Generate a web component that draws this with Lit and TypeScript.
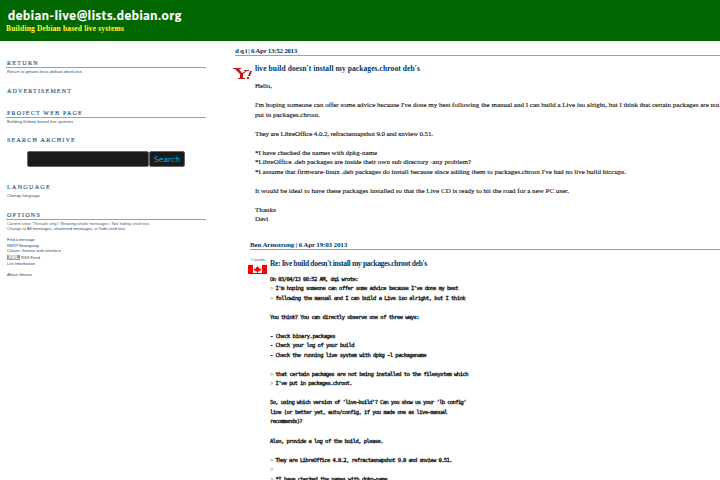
import { LitElement, html, css, svg } from "lit";
import { customElement, property } from "lit/decorators.js";

/** One line of text, tracked so that it fills the given measure. */
@customElement("fit-line")
class FitLine extends LitElement {
  @property({ type: Number }) measure = 0;
  static styles = css`
    :host { display: block; width: max-content; white-space: pre; }
    span { display: inline-block; white-space: pre; vertical-align: top; }
  `;
  render() {
    return html`<span><slot></slot></span>`;
  }
  firstUpdated() {
    const fit = () => {
      const n = (this.textContent || "").length;
      this.style.letterSpacing = "0px";
      const w = this.shadowRoot!.querySelector("span")!.getBoundingClientRect().width;
      if (n && w) this.style.letterSpacing = (this.measure - w) / n + "px";
    };
    fit();
    document.fonts.ready.then(fit);
  }
}

type Row = [string, number] | null;

const first: Row[] = [
  ["Hello,", 17],
  null,
  ["I'm hoping someone can offer some advice because I've done my best following the manual and I can build a Live iso alright, but I think that certain packages are not", 464.5],
  ["put in packages.chroot.", 65],
  null,
  ["They are LibreOffice 4.0.2, refractasnapshot 9.0 and xnview 0.51.", 178],
  null,
  ["*I have checked the names with dpkg-name", 122],
  ["*LibreOffice .deb packages are inside their own sub directory -any problem?", 216],
  ["*I assume that firmware-linux .deb packages do install because since adding them to packages.chroot I've had no live build hiccups.", 371],
  null,
  ["It would be ideal to have these packages installed so that the Live CD is ready to hit the road for a new PC user.", 314],
  null,
  ["Thanks", 21],
  ["Davi", 13],
];

const reply: Row[] = [
  ["On 03/04/13 08:52 AM, dqi wrote:", 88],
  ["> I'm hoping someone can offer some advice because I've done my best", 188],
  ["> following the manual and I can build a Live iso alright, but I think", 195],
  null,
  ["You think? You can directly observe one of three ways:", 149],
  null,
  ["- Check binary.packages", 65],
  ["- Check your log of your build", 84],
  ["- Check the running live system with dpkg -l packagename", 156],
  null,
  ["> that certain packages are not being installed to the filesystem which", 198],
  ["> I've put in packages.chroot.", 82],
  null,
  ["So, using which version of 'live-build'? Can you show us your 'lb config'", 196],
  ["line (or better yet, auto/config, if you made one as live-manual", 177],
  ["recommends)?", 32],
  null,
  ["Also, provide a log of the build, please.", 113],
  null,
  ["> They are LibreOffice 4.0.2, refractasnapshot 9.0 and xnview 0.51.", 182],
  [">", 4],
  ["> *I have checked the names with dpkg-name", 117],
];

@customElement("app-root")
class AppRoot extends LitElement {
  static styles = css`
    :host {
      display: block; width: 720px; height: 480px; overflow: hidden;
      background: #fff; color: #111;
      font-family: "Liberation Serif", serif;
    }
    header { height: 41px; box-sizing: border-box; padding: 7.5px 0 0 6px; background: #006600; }
    .list {
      font: 900 12.5px/16px Lato, sans-serif; color: #fff; padding-left: 2px;
      -webkit-text-stroke: 0.15px #fff;
    }
    .tag { font: bold 7.5px/9px "Liberation Serif", serif; color: #ffff33; }
    .body { display: flex; height: 439px; }
    aside {
      box-sizing: border-box; width: 206px; padding: 18px 0 0 6px; flex: none;
      display: grid; grid-template-rows: 28px 22px 27px 47px 28px 1fr;
      font: 4px/5px "Liberation Sans", sans-serif; color: #194673;
    }
    h2 {
      margin: 0; height: 8px; padding-left: 1px; border-bottom: 1px solid transparent;
      font: 6px/8px "Liberation Serif", serif; color: #265482;
      -webkit-text-stroke: 0.15px #265482;
    }
    .ruled { border-color: #8ba5c0; }
    .small { padding: 0.5px 0 0 1px; }
    .small.opts { padding-top: 1px; }
    .plain { color: #555; }
    .link { color: #194673; }
    .gap { margin-top: 6px; }
    .nudge { margin-top: 1px; }
    .feed { display: flex; align-items: center; gap: 1px; height: 6px; margin-top: 1px; }
    .xml {
      width: 13px; height: 5px; background: #999; color: #fff; text-align: center;
      font: bold 5px/5px "Liberation Sans", sans-serif;
    }
    .search { display: flex; margin: 6px 0 0 21px; width: 158px; height: 16px; }
    .field, .button {
      box-sizing: border-box; height: 16px; background: #1b1b1b;
      border: 1px solid #686868; border-radius: 2px;
    }
    .field { width: 122px; }
    .button {
      width: 36px; padding: 1px 0 0 4px; color: #00b4f0;
      font: 7.5px/14px "DejaVu Sans", sans-serif;
    }
    main { flex: 1; min-width: 0; padding-left: 29px; overflow: hidden; }
    .head {
      height: 9px; margin-top: 5px; border-bottom: 1px solid #8ba5c0; color: #003366;
      font: bold 7px/11px "Liberation Serif", serif;
    }
    .post { display: flex; }
    .mark { flex: none; }
    .one .mark { width: 20px; margin-left: -2px; padding-top: 12px; }
    .one .text { padding: 8px 0 0 2px; }
    .title { height: 10px; font: bold 7.5px/10px "Liberation Serif", serif; color: #003366; }
    .lines { font: 7px/9.53px "Liberation Serif", serif; -webkit-text-stroke: 0.12px #111; }
    .row { height: 9.53px; }
    .one .lines { padding-top: 8px; }
    .reply { margin-left: 15px; }
    .reply .head { margin-top: 15px; }
    .two .mark { width: 20px; margin-left: -2px; padding-top: 7px; }
    .two .text { padding: 9px 0 0 2px; }
    .country { color: #555; font: 4.5px/5px "Liberation Serif", serif; padding-left: 3px; height: 8px; }
    .two .lines {
      padding-top: 6px; font: 5.5px/9.53px "DejaVu Sans Mono", monospace;
      color: #222; -webkit-text-stroke: 0.35px #222;
    }
    .quote { color: #888; -webkit-text-stroke: 0; }
    svg { display: block; }
  `;

  private lines(rows: Row[]) {
    return rows.map((r) => {
      if (!r) return html`<div class="row"></div>`;
      const quoted = r[0].startsWith(">");
      return html`<div class="row"><fit-line .measure=${r[1]}>${
        quoted ? html`<span class="quote">&gt;</span>${r[0].slice(1)}` : r[0]
      }</fit-line></div>`;
    });
  }

  private fit(text: string, measure: number, cls = "") {
    return html`<div class=${cls}><fit-line .measure=${measure}>${text}</fit-line></div>`;
  }

  render() {
    return html`
      <header>
        <fit-line class="list" .measure=${174}>debian-live@lists.debian.org</fit-line>
        <fit-line class="tag" .measure=${118}>Building Debian based live systems</fit-line>
      </header>
      <div class="body">
        <aside>
          <section>
            <h2 class="ruled"><fit-line .measure=${32}>RETURN</fit-line></h2>
            <div class="small">${this.fit("Return to gmane.linux.debian.devel.live.", 76)}</div>
          </section>
          <section><h2><fit-line .measure=${65}>ADVERTISEMENT</fit-line></h2></section>
          <section>
            <h2 class="ruled"><fit-line .measure=${76}>PROJECT WEB PAGE</fit-line></h2>
            <div class="small">${this.fit("Building Debian based live systems", 66)}</div>
          </section>
          <section>
            <h2><fit-line .measure=${69}>SEARCH ARCHIVE</fit-line></h2>
            <div class="search">
              <div class="field"></div>
              <div class="button"><fit-line .measure=${26}>Search</fit-line></div>
            </div>
          </section>
          <section>
            <h2><fit-line .measure=${44}>LANGUAGE</fit-line></h2>
            <div class="small">${this.fit("Change language", 33)}</div>
          </section>
          <section>
            <h2 class="ruled"><fit-line .measure=${34}>OPTIONS</fit-line></h2>
            <div class="small opts">
              ${this.fit("Current view: Threads only / Showing whole messages / Not hiding cited text.", 143, "plain")}
              <fit-line class="plain" .measure=${119}>Change to <span class="link">All messages</span>, <span class="link">shortened messages</span>, or <span class="link">hide cited text</span>.</fit-line>
              ${this.fit("Find a message", 28, "gap")}
              ${this.fit("NNTP Newsgroup", 32, "nudge")}
              ${this.fit("Classic Gmane web interface", 54)}
              <div class="feed"><div class="xml">XML</div>${this.fit("RSS Feed", 19)}</div>
              ${this.fit("List Information", 28, "nudge")}
              ${this.fit("About Gmane", 25, "gap")}
            </div>
          </section>
        </aside>
        <main>
          <div class="head"><fit-line .measure=${62}>d q i | 6 Apr 13:52 2013</fit-line></div>
          <div class="post one">
            <div class="mark">${this.yahoo()}</div>
            <div class="text">
              ${this.fit("live build doesn't install my packages.chroot deb's", 165, "title")}
              <div class="lines">${this.lines(first)}</div>
            </div>
          </div>
          <div class="reply">
            <div class="head"><fit-line .measure=${97}>Ben Armstrong | 6 Apr 19:03 2013</fit-line></div>
            <div class="post two">
              <div class="mark">
                ${this.fit("Canada", 14, "country")}
                ${this.flag()}
              </div>
              <div class="text">
                ${this.fit("Re: live build doesn't install my packages.chroot deb's", 157, "title")}
                <div class="lines">${this.lines(reply)}</div>
              </div>
            </div>
          </div>
        </main>
      </div>
    `;
  }

  private yahoo() {
    return html`<svg width="20" height="12" viewBox="0 0 20 12">${svg`
      <path d="M0 0H8V1H6L9 5L13 3H11V2H16V3H14L10 6V10H12V11H5V10H7V6L2 1H0Z" fill="#b31b1f"/>
      <path d="M17 3H19L17 8H15Z M14 9H16V11H14Z" fill="#b31b1f"/>`}</svg>`;
  }

  private flag() {
    return html`<svg width="19" height="9" viewBox="0 0 19 9">${svg`
      <path d="M0 0H19V9H0Z" fill="#fff"/>
      <path d="M0 0H5V9H0Z M14 0H19V9H14Z" fill="#f00"/>
      <path d="M9.5 1L10.5 2.5L11.3 2.2V4L13.5 3.5L13 5L11 6.5H10V8H9V6.5H8L6 5L5.5 3.5L7.7 4V2.2L8.5 2.5Z" fill="#f00"/>
      <path d="M0 8.5H19" stroke="#444" stroke-width="1"/>`}</svg>`;
  }
}
